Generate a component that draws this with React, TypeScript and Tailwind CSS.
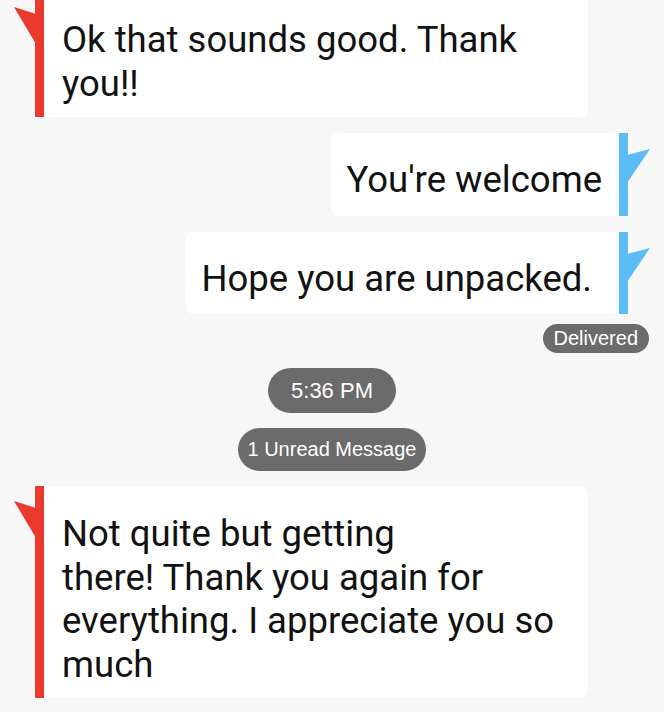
import React from "react";

const RedFlag = () => (
  <svg className="absolute left-[-22px] top-0" width="32" height="60" viewBox="0 0 32 60">
    <polygon points="23,22 1,15 23,52" fill="#ea3a2e" />
  </svg>
);

const BlueFlag = () => (
  <svg className="absolute left-0 top-0" width="34" height="60" viewBox="0 0 34 60">
    <polygon points="8,22 31,16 8,50" fill="#5cbcf6" />
  </svg>
);

function Received({ lines, top }: { lines: string[]; top: string }) {
  return (
    <div className={`flex pl-[35px] ${top}`}>
      <div className="relative w-[9px] bg-[#ea3a2e] shrink-0">
        <RedFlag />
      </div>
      <div className="ml-[1px] w-[543px] bg-white rounded-r-[8px] pl-[17px] pt-[26px] pb-[12px] text-[36.5px] leading-[43.5px] text-[#111] whitespace-nowrap" style={{ fontFamily: "Roboto, 'Noto Sans', sans-serif" }}>
        {lines.map((l, i) => (
          <div key={i}>{l}</div>
        ))}
      </div>
    </div>
  );
}

function Sent({ text, top, pr }: { text: string; top: string; pr: string }) {
  return (
    <div className={`flex justify-end pr-[36px] ${top}`}>
      <div className={`bg-white rounded-l-[8px] rounded-r-[3px] pl-[16px] ${pr} pt-[25px] pb-[14px] text-[36.5px] leading-[43.5px] text-[#111] whitespace-nowrap`} style={{ fontFamily: "Roboto, 'Noto Sans', sans-serif" }}>
        {text}
      </div>
      <div className="relative ml-[3px] w-[9px] bg-[#5cbcf6] shrink-0">
        <BlueFlag />
      </div>
    </div>
  );
}

export default function App() {
  return (
    <div className="w-[664px] h-[712px] overflow-hidden bg-[#f7f7f7] flex flex-col">
      <Received top="-mt-[8px]" lines={["Ok that sounds good. Thank", "you!!"]} />
      <Sent top="mt-[16px]" pr="pr-[14px]" text="You're welcome" />
      <Sent top="mt-[16px]" pr="pr-[24px]" text="Hope you are unpacked." />
      <div className="flex justify-end pr-[15px] mt-[10px]">
        <div className="h-[29px] px-[11px] rounded-full bg-[#6b6b6b] text-white text-[20px] leading-[29px]" style={{ fontFamily: "'Liberation Sans', Arial, sans-serif" }}>
          Delivered
        </div>
      </div>
      <div className="flex justify-center mt-[15px]">
        <div className="h-[45px] px-[23px] rounded-full bg-[#6b6b6b] text-white text-[22px] leading-[45px]" style={{ fontFamily: "'Liberation Sans', Arial, sans-serif" }}>
          5:36 PM
        </div>
      </div>
      <div className="flex justify-center mt-[15px]">
        <div className="h-[43px] px-[10px] rounded-full bg-[#6b6b6b] text-white text-[20px] leading-[43px]" style={{ fontFamily: "'Liberation Sans', Arial, sans-serif" }}>
          1 Unread Message
        </div>
      </div>
      <Received
        top="mt-[15px]"
        lines={["Not quite but getting", "there! Thank you again for", "everything. I appreciate you so", "much"]}
      />
    </div>
  );
}
